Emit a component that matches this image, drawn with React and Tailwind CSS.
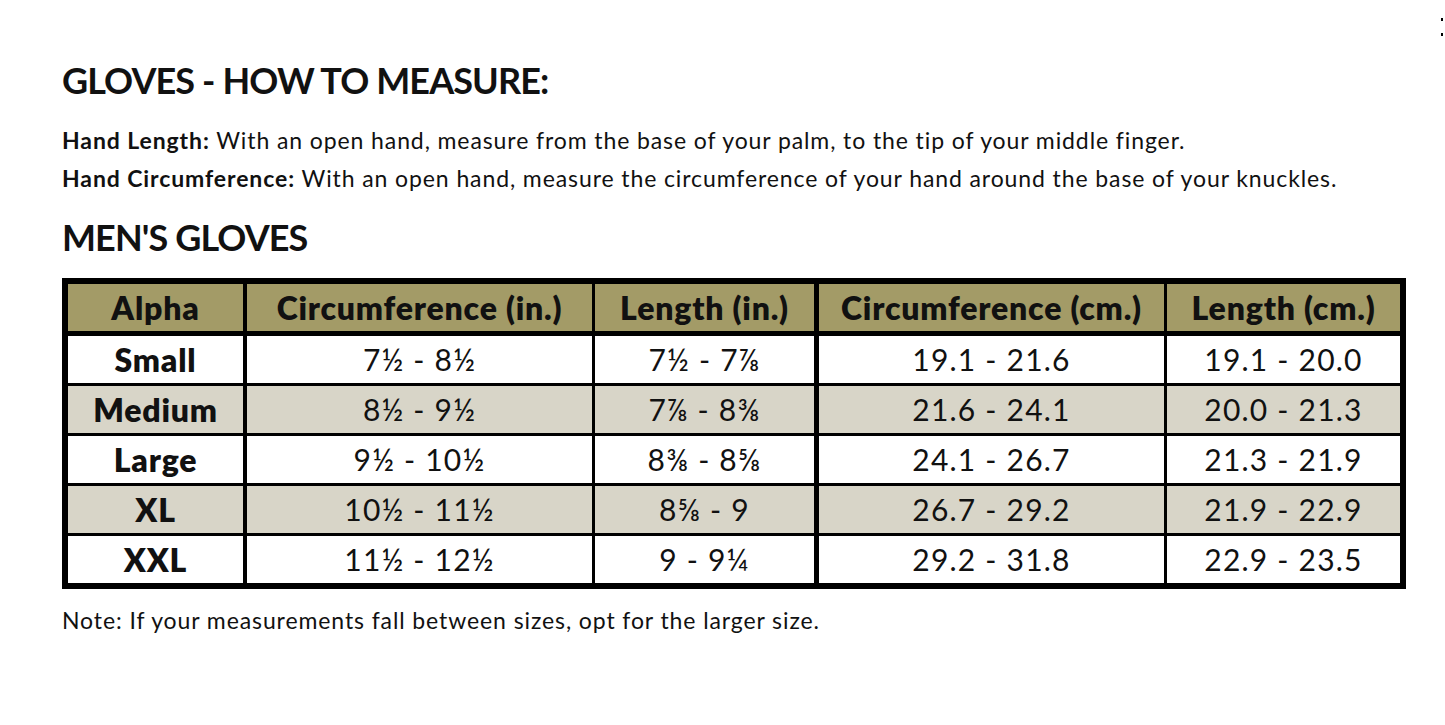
import React from 'react';

const rows = [
    { alpha: 'Small', cin: '7½ - 8½', lin: '7½ - 7⅞', ccm: '19.1 - 21.6', lcm: '19.1 - 20.0' },
    { alpha: 'Medium', cin: '8½ - 9½', lin: '7⅞ - 8⅜', ccm: '21.6 - 24.1', lcm: '20.0 - 21.3' },
    { alpha: 'Large', cin: '9½ - 10½', lin: '8⅜ - 8⅝', ccm: '24.1 - 26.7', lcm: '21.3 - 21.9' },
    { alpha: 'XL', cin: '10½ - 11½', lin: '8⅝ - 9', ccm: '26.7 - 29.2', lcm: '21.9 - 22.9' },
    { alpha: 'XXL', cin: '11½ - 12½', lin: '9 - 9¼', ccm: '29.2 - 31.8', lcm: '22.9 - 23.5' },
];

const font = "font-['Lato','Noto_Sans',sans-serif]";
const bold = 'font-extrabold text-[32px] tracking-[0.8px]';
const reg = 'text-[30px] tracking-[1.2px]';

const Row = ({ cells, bg, head }) => (
    <div className="flex h-[47px]">
        <div className={`w-[175px] flex items-center justify-center ${bg} ${bold}`}>{cells[0]}</div>
        <div className={`w-[345px] ml-[4px] flex items-center justify-center ${bg} ${head ? bold : reg}`}>{cells[1]}</div>
        <div className={`w-[219px] ml-[3px] flex items-center justify-center ${bg} ${head ? bold : reg}`}>{cells[2]}</div>
        <div className={`w-[345px] ml-[5px] flex items-center justify-center ${bg} ${head ? bold : reg}`}>{cells[3]}</div>
        <div className={`w-[233px] ml-[3px] flex items-center justify-center ${bg} ${head ? bold : reg}`}>{cells[4]}</div>
    </div>
);

export default function App() {
    return (
        <div className={`relative w-[1445px] h-[725px] bg-white text-[#111] ${font}`}>
            {/* stray glyph at the right edge */}
            <div className="absolute right-[2px] top-[18px] flex flex-col gap-[12px]">
                <span className="block w-[2px] h-[3px] bg-black"></span>
                <span className="block w-[2px] h-[3px] bg-black"></span>
            </div>

            <div className="pl-[62px] pt-[56px]">
                <h1 className="text-[36px] font-bold leading-[48px] tracking-[-0.9px] uppercase">Gloves - How to Measure:</h1>

                <div className="mt-[17px] text-[23px] leading-[38px] tracking-[0.9px]">
                    <p><span className="font-bold">Hand Length:</span> With an open hand, measure from the base of your palm, to the tip of your middle finger.</p>
                    <p><span className="font-bold">Hand Circumference:</span> With an open hand, measure the circumference of your hand around the base of your knuckles.</p>
                </div>

                <h2 className="mt-[16px] text-[36px] font-bold leading-[48px] tracking-[-0.9px] uppercase">Men's Gloves</h2>

                <div className="mt-[17px] w-[1344px] bg-black p-[6px] flex flex-col">
                    <Row head bg="bg-[#a39b67]" cells={['Alpha', 'Circumference (in.)', 'Length (in.)', 'Circumference (cm.)', 'Length (cm.)']} />
                    <div className="mt-[5px] flex flex-col gap-[3px]">
                        {rows.map((r, i) => (
                            <Row key={r.alpha} bg={i % 2 ? 'bg-[#d8d5c8]' : 'bg-white'} cells={[r.alpha, r.cin, r.lin, r.ccm, r.lcm]} />
                        ))}
                    </div>
                </div>

                <p className="mt-[16px] text-[23px] leading-[30px] tracking-[0.9px]">Note: If your measurements fall between sizes, opt for the larger size.</p>
            </div>
        </div>
    );
}
